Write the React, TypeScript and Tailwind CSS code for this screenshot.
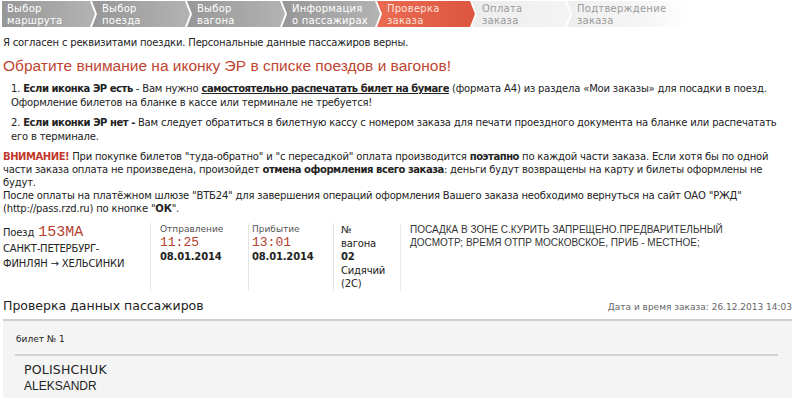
import React from "react";

const steps = [
  { a: "Выбор", b: "маршрута", state: "done" },
  { a: "Выбор", b: "поезда", state: "done" },
  { a: "Выбор", b: "вагона", state: "done" },
  { a: "Информация", b: "о пассажирах", state: "done" },
  { a: "Проверка", b: "заказа", state: "current" },
  { a: "Оплата", b: "заказа", state: "next" },
  { a: "Подтверждение", b: "заказа", state: "last" },
];

function StepBar() {
  return (
    <div className="flex h-[26px] mt-[1px] ml-[2px]">
      {steps.map((s, i) => {
        const first = i === 0;
        const last = s.state === "last";
        const bg =
          s.state === "done"
            ? "bg-[linear-gradient(90deg,#979797,#b3b3b3)] text-white"
            : s.state === "current"
            ? "bg-[linear-gradient(90deg,#ea6a52,#dc5640)] text-[#fde3dc]"
            : s.state === "next"
            ? "bg-[linear-gradient(90deg,#ececec,#f4f4f4)] text-[#9a9a9a]"
            : "bg-[linear-gradient(90deg,#efefef,#f6f6f6_70%,#ffffff)] text-[#9a9a9a]";
        const shape = first
          ? "w-[93px] pl-[5px] [clip-path:polygon(0_0,88px_0,93px_50%,88px_100%,0_100%)]"
          : last
          ? "w-[118px] -ml-[3px] pl-[10px] [clip-path:polygon(0_0,100%_0,100%_100%,0_100%,5px_50%)]"
          : "w-[98px] -ml-[3px] pl-[10px] [clip-path:polygon(0_0,93px_0,98px_50%,93px_100%,0_100%,5px_50%)]";
        return (
          <div
            key={i}
            className={`${shape} pt-[2px] leading-[12px] text-[10px] tracking-[0.25px] ${bg}`}
          >
            <div>{s.a}</div>
            <div>{s.b}</div>
          </div>
        );
      })}
    </div>
  );
}

export default function App() {
  return (
    <div className="w-[800px] h-[398px] overflow-hidden bg-white text-[#222] font-['DejaVu_Sans',sans-serif] text-[10px] tracking-[-0.18px]">
      <StepBar />

      <div className="px-[3px]">
        <p className="mt-[9px] leading-[13px] whitespace-nowrap">
          Я согласен с реквизитами поездки. Персональные данные пассажиров верны.
        </p>

        <h2 className="mt-[8px] font-['Liberation_Sans',sans-serif] text-[15.5px] leading-[18px] tracking-normal text-[#bf4531] whitespace-nowrap">
          Обратите внимание на иконку ЭР в списке поездов и вагонов!
        </h2>

        <div className="mt-[7px] pl-[8px] leading-[14px] whitespace-nowrap">
          <p>
            1. <b className="tracking-[-0.45px]">Если иконка ЭР есть</b> - Вам нужно{" "}
            <b className="underline tracking-[-0.45px]">самостоятельно распечатать билет на бумаге</b> (формата A4) из раздела «Мои заказы» для посадки в поезд.
            <br />
            Оформление билетов на бланке в кассе или терминале не требуется!
          </p>
          <p className="mt-[6px]">
            2. <b className="tracking-[-0.45px]">Если иконки ЭР нет -</b> Вам следует обратиться в билетную кассу с номером заказа для печати проездного документа на бланке или распечатать
            <br />
            его в терминале.
          </p>
        </div>

        <div className="mt-[6px] leading-[13px] whitespace-nowrap">
          <p>
            <b className="text-[#c0392b] tracking-[-0.45px]">ВНИМАНИЕ!</b> При покупке билетов "туда-обратно" и "с пересадкой" оплата производится{" "}
            <b className="tracking-[-0.45px]">поэтапно</b> по каждой части заказа. Если хотя бы по одной
            <br />
            части заказа оплата не произведена, произойдет <b className="tracking-[-0.45px]">отмена оформления всего заказа</b>: деньги будут возвращены на карту и билеты оформлены не
            <br />
            будут.
          </p>
          <p>
            После оплаты на платёжном шлюзе "ВТБ24" для завершения операций оформления Вашего заказа необходимо вернуться на сайт ОАО "РЖД"
            <br />
            (http://pass.rzd.ru) по кнопке "<b>ОК</b>".
          </p>
        </div>

        {/* Train */}
        <div className="mt-[8px] flex h-[68px] leading-[13px]">
          <div className="w-[147px] pt-[3px]">
            <div className="flex items-baseline gap-[4px]">
              <span>Поезд</span>
              <span className="font-['Liberation_Mono',monospace] text-[15px] tracking-normal text-[#b5402e]">153МА</span>
            </div>
            <div className="mt-[2px] leading-[15px]">
              САНКТ-ПЕТЕРБУРГ-
              <br />
              ФИНЛЯН → ХЕЛЬСИНКИ
            </div>
          </div>
          <div className="w-[98px] border-l border-[#e4e4e4] pl-[9px]">
            <div className="text-[9px] text-[#555] tracking-normal">Отправление</div>
            <div className="font-['Liberation_Mono',monospace] text-[13px] leading-[14px] tracking-normal text-[#b5402e]">11:25</div>
            <div className="font-bold">08.01.2014</div>
          </div>
          <div className="w-[85px] border-l border-[#e4e4e4] pl-[3px]">
            <div className="text-[9px] text-[#555] tracking-normal">Прибытие</div>
            <div className="font-['Liberation_Mono',monospace] text-[13px] leading-[14px] tracking-normal text-[#b5402e]">13:01</div>
            <div className="font-bold">08.01.2014</div>
          </div>
          <div className="w-[67px] border-l border-[#e4e4e4] pl-[7px] leading-[13.5px]">
            <div>№</div>
            <div>вагона</div>
            <div className="font-bold">02</div>
            <div>Сидячий</div>
            <div>(2С)</div>
          </div>
          <div className="flex-1 border-l border-[#ececec] pl-[9px] font-['Liberation_Sans',sans-serif] text-[10px] leading-[13px] tracking-normal text-[#333]">
            ПОСАДКА В ЗОНЕ С.КУРИТЬ ЗАПРЕЩЕНО.ПРЕДВАРИТЕЛЬНЫЙ
            <br />
            ДОСМОТР; ВРЕМЯ ОТПР МОСКОВСКОЕ, ПРИБ - МЕСТНОЕ;
          </div>
        </div>

        {/* Passengers */}
        <div className="mt-[7px] flex items-end justify-between pr-[5px]">
          <h3 className="text-[12.5px] leading-[16px] tracking-normal text-[#222]">Проверка данных пассажиров</h3>
          <span className="text-[9px] leading-[14px] tracking-normal text-[#666]">Дата и время заказа: 26.12.2013 14:03</span>
        </div>

        <div className="mt-[5px] mr-[5px] border-t-2 border-[#d0d0d0] bg-[#f4f4f4] px-[12px] pt-[12px] pb-[20px]">
          <div className="pl-[1px] text-[9px] leading-[12px] tracking-normal">билет № 1</div>
          <div className="mt-[9px] mr-[2px] border-t-2 border-[#d2d2d2]" />
          <div className="pl-[9px] pt-[5px]">
            <div className="text-[12.5px] leading-[17px] tracking-[0.2px]">POLISHCHUK</div>
            <div className="font-['Liberation_Sans',sans-serif] text-[12px] leading-[17px] tracking-normal">ALEKSANDR</div>
          </div>
        </div>
      </div>
    </div>
  );
}
